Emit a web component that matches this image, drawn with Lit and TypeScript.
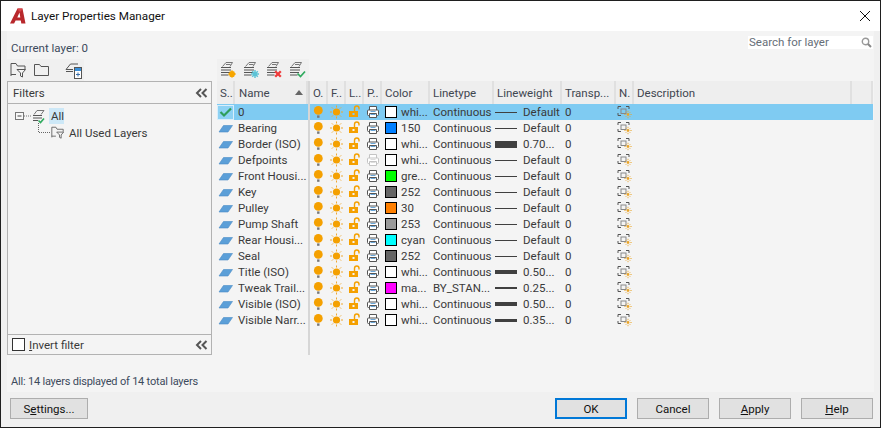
import { LitElement, html, css, svg } from "lit";
import { customElement } from "lit/decorators.js";

const G = "#555";
const ORANGE = "#f4a000";

const bulb = () => html`<svg class="ic" width="18" height="16" viewBox="0 0 18 16"><circle cx="8.3" cy="6.4" r="4.4" fill="${ORANGE}"/><rect x="7.1" y="11.4" width="2.4" height="2.4" fill="#777"/></svg>`;
const sun = () => html`<svg class="ic" width="18" height="16" viewBox="0 0 18 16"><circle cx="8.5" cy="8" r="3.6" fill="${ORANGE}"/><g stroke="#f0a830" stroke-width="1" fill="none"><path d="M8.5 1.5v2M8.5 12.5v2M2 8h2M13 8h2M3.9 3.4l1.2 1.2M11.9 11.4l1.2 1.2M13.1 3.4l-1.2 1.2M5.1 11.4l-1.2 1.2"/></g></svg>`;
const lock = () => html`<svg class="ic" width="18" height="16" viewBox="0 0 18 16"><path d="M3 7h9v6H3zM6.5 9v2h2V9z" fill="${ORANGE}" fill-rule="evenodd"/><path d="M8.5 7V4.2C8.5 2.8 9.5 2 10.8 2s2.2.8 2.2 2.2V5.5" fill="none" stroke="${ORANGE}" stroke-width="1.4"/></svg>`;
const printer = (dim: boolean) => {
  const c = dim ? "#c4c4c4" : G;
  return html`<svg class="ic" width="18" height="16" viewBox="0 0 18 16"><path d="M5.5 6V2.5h7V6" fill="#fff" stroke="${c}"/><rect x="3.5" y="6" width="11" height="5.5" rx="1" fill="#fff" stroke="${c}"/><path d="M5.5 9.5v4h7v-4z" fill="#fff" stroke="${c}"/><path d="M6.5 10.5h5" stroke="${dim ? "#ddd" : "#6aa6d8"}"/><path d="M6.5 7.5h5" stroke="${dim ? "#ddd" : "#6aa6d8"}"/></svg>`;
};
const vpIcon = () => html`<svg class="ic" width="18" height="16" viewBox="0 0 18 16"><path d="M2 5V2.5h3M10 2.5h3V5M2 9v2.5h3" fill="none" stroke="${G}"/><rect x="5" y="5" width="5" height="4.5" fill="none" stroke="#888"/><circle cx="12" cy="10.5" r="1.4" fill="#eaa52a"/><path d="M12 6.8v1.4M12 12.8v1.4M8.3 10.5h1.4M14.3 10.5h1.4M9.6 8.1l.8.8M13.6 12.1l.8.8M14.4 8.1l-.8.8M10.4 12.1l-.8.8" stroke="#eaa52a" stroke-width=".8"/></svg>`;
const parallelogram = () => html`<svg class="ic" width="18" height="16" viewBox="0 0 18 16"><path d="M2 12 6.5 5.5H15.5L11 12Z" fill="#5b9fd8" stroke="#4a8cc6" stroke-width=".6"/></svg>`;
const check = () => html`<span class="cur"><svg width="14" height="12" viewBox="0 0 14 12"><path d="M1.5 6 5 9.5 12 2.5" fill="none" stroke="#2f9e5b" stroke-width="2.2"/></svg></span>`;
const chevrons = () => html`<svg class="chev" width="13" height="10" viewBox="0 0 13 10"><path d="M6 1 2 5l4 4M11.5 1l-4 4 4 4" fill="none" stroke="#555" stroke-width="2"/></svg>`;

const stack = svg`<g fill="none" stroke="${G}" stroke-width="1"><path d="M2 7.5h10M2 10h10M2 12.5h9M2 15h7.5"/><path d="M3.5 6.5 7 2.5h6.5L11 6.5M7 4.5h4.5" stroke="#777"/></g>`;
const layerIcon = (mark: unknown) => html`<svg class="tool" width="20" height="20" viewBox="0 0 20 20">${stack}${mark}</svg>`;
const markStar = svg`<path d="M13 10.5v7M9.5 14h7M10.7 11.7l4.6 4.6M15.3 11.7l-4.6 4.6" stroke="#f7a600" stroke-width="1.8"/>`;
const markSnow = svg`<path d="M13 10v8M9 14h8M10.2 11.2l5.6 5.6M15.8 11.2l-5.6 5.6" stroke="#5cc3d6" stroke-width="1.5"/>`;
const markX = svg`<path d="M10.2 11.2l5.6 5.6M15.8 11.2l-5.6 5.6" stroke="#ef3b3b" stroke-width="2.3"/>`;
const markCheck = svg`<path d="M9.5 13.5l3 3 4.5-5" fill="none" stroke="#2faa5e" stroke-width="1.7"/>`;

const folderFilter = (s = 16) => html`<svg width="${s}" height="${s}" viewBox="0 0 16 16"><path d="M1 14V1.5h5L7.5 4H15v3M1 12.5h5" fill="none" stroke="${G}"/><path d="M7 7.5h8.5L12.5 11v4l-2-1v-3z" fill="#f4f4f4" stroke="${G}"/></svg>`;
const folder = () => html`<svg width="15" height="14" viewBox="0 0 15 14"><path d="M.5 12.5V1.5h5L7 3.5h7.5v9z" fill="none" stroke="${G}"/></svg>`;
const docIcon = () => html`<svg width="17" height="17" viewBox="0 0 17 17"><path d="M1 7.5 5.5 2H13M1 9.5h7M1 7.5h7" fill="none" stroke="${G}"/><rect x="9.5" y="5.5" width="7" height="11" fill="#fff" stroke="${G}"/><rect x="10" y="6" width="6" height="3" fill="#3a8fd8"/><path d="M13 10.5v4M11 12.5h4" stroke="#3a6ea8"/></svg>`;
const logo = () => html`<svg width="16" height="16" viewBox="0 0 16 16"><path d="M0 15.5 7.5 .5h5l3 15h-4.2l-.5-3H5.6l-1.5 3zM7.3 9.5h3L9.5 4.5z" fill="#b8282c" fill-rule="evenodd"/><path d="M7.5 .5h5l-1.6 3H8.8z" fill="#d9464a"/></svg>`;

interface Layer { name: string; color: string; sw: string; type?: string; lw: number; weight?: string; dim?: boolean; cur?: boolean }
const layers: Layer[] = [
  { name: "0", color: "whi...", sw: "#fff", lw: 1, cur: true },
  { name: "Bearing", color: "150", sw: "#007fff", lw: 1 },
  { name: "Border (ISO)", color: "whi...", sw: "#fff", lw: 7, weight: "0.70..." },
  { name: "Defpoints", color: "whi...", sw: "#fff", lw: 1, dim: true },
  { name: "Front Housi...", color: "gre...", sw: "#00ff00", lw: 1 },
  { name: "Key", color: "252", sw: "#656565", lw: 1 },
  { name: "Pulley", color: "30", sw: "#ff7f00", lw: 1 },
  { name: "Pump Shaft", color: "253", sw: "#9a9a9a", lw: 1 },
  { name: "Rear Housi...", color: "cyan", sw: "#00ffff", lw: 1 },
  { name: "Seal", color: "252", sw: "#656565", lw: 1 },
  { name: "Title (ISO)", color: "whi...", sw: "#fff", lw: 4, weight: "0.50..." },
  { name: "Tweak Trail...", color: "ma...", sw: "#ff00ff", type: "BY_STAN...", lw: 2, weight: "0.25..." },
  { name: "Visible (ISO)", color: "whi...", sw: "#fff", lw: 4, weight: "0.50..." },
  { name: "Visible Narr...", color: "whi...", sw: "#fff", lw: 3, weight: "0.35..." },
];

@customElement("app-root")
export class AppRoot extends LitElement {
  static styles = css`
    :host { display: block; width: 881px; height: 428px; font-family: Roboto, "Open Sans", sans-serif; font-size: 11.5px; color: #3a3a3a; }
    * { box-sizing: border-box; }
    svg { display: block; flex: none; }
    .win { height: 428px; border: 1px solid #1f1f1f; background: #f0f0f0; display: flex; flex-direction: column; }
    .title { height: 30px; background: #fff; display: flex; align-items: center; padding: 0 10px 0 9px; gap: 5px; color: #111; font-size: 11.7px; flex: none; }
    .title .name { flex: 1; }
    .main { flex: 1; margin: 0 6px 0 6px; background: #f4f4f4; display: flex; flex-direction: column; min-height: 0; }
    .top { display: flex; justify-content: space-between; align-items: flex-start; height: 24px; padding-top: 5px; flex: none; }
    .cl { padding: 5px 0 0 4px; color: #3c4a5c; line-height: 14px; }
    .search { width: 125px; height: 13px; background: #fff; display: flex; align-items: center; justify-content: space-between; color: #666e78; padding: 0 1px 0 1px; margin-right: 1px; line-height: 13px; }
    .bars { display: flex; height: 22px; margin-top: 4px; flex: none; gap: 5px; }
    .bar { display: flex; align-items: center; background: #f0f0f0; }
    .bar.l { width: 77px; margin-right: 128px; padding-left: 3px; }
    .bar.l svg:nth-child(2) { margin: 0 0 0 8px; }
    .bar.l svg:nth-child(3) { margin-left: 16px; }
    .bar.r { width: 92px; padding-left: 2px; gap: 3px; }
    .tool { width: 20px; height: 20px; }
    .content { display: flex; gap: 5px; height: 274px; flex: none; }
    .filters { width: 205px; border: 1px solid #b2b2b2; display: flex; flex-direction: column; flex: none; }
    .fhead { height: 22px; border-bottom: 1px solid #b2b2b2; display: flex; align-items: center; justify-content: space-between; padding: 0 3px 0 5px; flex: none; }
    .chev { margin-top: 1px; }
    .tree { flex: 1; padding: 4px 0 0 7px; }
    .node { display: flex; align-items: center; height: 16px; }
    .sel { background: #cde8f7; padding: 0 2px; margin-left: 4px; line-height: 16px; width: 15px; }
    .child { display: flex; align-items: flex-start; height: 18px; padding-left: 23px; margin-top: -1px; }
    .child svg:nth-child(2) { margin-top: 3px; }
    .child span { margin: 3px 0 0 5px; line-height: 14px; }
    .ffoot { height: 20px; border-top: 1px solid #b2b2b2; display: flex; align-items: center; padding: 0 3px 0 4px; flex: none; }
    .box { width: 13px; height: 13px; border: 1px solid #333; background: #fff; margin-right: 4px; flex: none; }
    .ffoot .t { flex: 1; }
    u { text-underline-offset: 1px; }
    .table { width: 656px; display: flex; flex-direction: column; flex: none; }
    .grid { display: grid; grid-template-columns: 18px 73px 2px 18px 18px 18px 18px 48px 64px 68px 54px 18px 218px 21px; }
    .hdr { height: 23px; background: #eeeeee; }
    .hdr > div { border-right: 2px solid #e0e0e0; display: flex; align-items: center; padding-left: 3px; white-space: nowrap; overflow: hidden; justify-content: space-between; padding-right: 3px; color: #3f4650; }
    .hdr > .split, .fill > .split, .row > .split { background: #d6d6d6; border: none; padding: 0; }
    .hdr > .sn { padding-left: 4px; }
    .row { height: 16px; line-height: 16px; white-space: nowrap; }
    .row.on { background: #7fcbf2; }
    .row > div { display: flex; align-items: center; overflow: hidden; }
    .cname { padding-left: 3px; }
    .ccolor { padding-left: 3px; gap: 4px; }
    .sw { width: 12px; height: 12px; border: 1px solid #000; flex: none; }
    .ctype { padding-left: 3px; }
    .cw { padding-left: 1px; }
    .ln { width: 22px; background: #404040; flex: none; }
    .cw span { margin-left: 6px; }
    .ctr { padding-left: 3px; }
    .cur { width: 17px; height: 15px; border: 1px solid #d8eefb; display: flex; align-items: center; justify-content: center; background: #8ed2f4; }
    .fill { flex: 1; }
    .status { height: 17px; margin-top: 18px; padding-left: 4px; line-height: 17px; color: #3c4a5c; flex: none; font-size: 11px; letter-spacing: -0.2px; }
    .foot { height: 35px; flex: none; display: flex; align-items: flex-start; padding: 6px 7px 0 9px; gap: 10px; }
    .btn { width: 72px; height: 21px; background: #e1e1e1; border: 1px solid #adadad; display: flex; align-items: center; justify-content: center; color: #111; font-size: 11.5px; }
    .btn.s { width: 78px; margin-right: auto; }
    .btn.d { border: 2px solid #0078d7; }
  `;

  private row(l: Layer) {
    return html`<div class="grid row ${l.cur ? "on" : ""}">
      <div>${l.cur ? check() : parallelogram()}</div>
      <div class="cname">${l.name}</div>
      <div class="split"></div>
      <div>${bulb()}</div><div>${sun()}</div><div>${lock()}</div><div>${printer(!!l.dim)}</div>
      <div class="ccolor"><i class="sw" style="background:${l.sw}"></i>${l.color}</div>
      <div class="ctype">${l.type ?? "Continuous"}</div>
      <div class="cw"><i class="ln" style="height:${l.lw}px"></i><span>${l.weight ?? "Default"}</span></div>
      <div class="ctr">0</div>
      <div>${vpIcon()}</div><div></div><div></div>
    </div>`;
  }

  render() {
    return html`<div class="win">
      <div class="title">${logo()}<span class="name">Layer Properties Manager</span>
        <svg width="10" height="10" viewBox="0 0 10 10"><path d="M0 0l10 10M10 0 0 10" stroke="#111" stroke-width="1"/></svg></div>
      <div class="main">
        <div class="top"><div class="cl">Current layer: 0</div>
          <div class="search">Search for layer<svg width="11" height="11" viewBox="0 0 11 11"><circle cx="4.5" cy="4.5" r="3.2" fill="none" stroke="#999" stroke-width="1.4"/><path d="M7 7l3 3" stroke="#888" stroke-width="2"/></svg></div></div>
        <div class="bars">
          <div class="bar l">${folderFilter()}${folder()}${docIcon()}</div>
          <div class="bar r">${layerIcon(markStar)}${layerIcon(markSnow)}${layerIcon(markX)}${layerIcon(markCheck)}</div>
        </div>
        <div class="content">
          <div class="filters">
            <div class="fhead"><span>Filters</span>${chevrons()}</div>
            <div class="tree">
              <div class="node">
                <svg width="30" height="16" viewBox="0 0 30 16"><rect x=".5" y="4.5" width="8" height="7" fill="#f8f8f8" stroke="#777"/><path d="M2.5 8h4" stroke="#444"/><path d="M9 8h8" stroke="#777" stroke-dasharray="1 1"/><g fill="none" stroke="${G}"><path d="M18 7.5h9M18 10h9M18 12.5h5"/><path d="M19 6.5 22 2.5H29L26 6.5" stroke="#777"/></g><path d="M23.5 12.5l2 2 3.5-4" fill="none" stroke="#2faa5e" stroke-width="1.6"/></svg>
                <span class="sel">All</span>
              </div>
              <div class="child">
                <svg width="13" height="18" viewBox="0 0 13 18"><path d="M.5 0v9.5H13" fill="none" stroke="#666" stroke-dasharray="1 1"/></svg>
                ${folderFilter(13)}<span>All Used Layers</span>
              </div>
            </div>
            <div class="ffoot"><i class="box"></i><div class="t"><u>I</u>nvert filter</div>${chevrons()}</div>
          </div>
          <div class="table">
            <div class="grid hdr">
              <div>S..</div>
              <div class="sn">Name<svg width="8" height="5" viewBox="0 0 8 5"><path d="M0 5 4 0l4 5z" fill="#666"/></svg></div>
              <div class="split"></div>
              <div>O.</div><div>F..</div><div>L..</div><div>P..</div>
              <div>Color</div><div>Linetype</div><div>Lineweight</div><div>Transp...</div><div>N.</div><div>Description</div><div></div>
            </div>
            ${layers.map((l) => this.row(l))}
            <div class="grid fill"><div></div><div></div><div class="split"></div></div>
          </div>
        </div>
        <div class="status">All: 14 layers displayed of 14 total layers</div>
      </div>
      <div class="foot">
        <div class="btn s">S<u>e</u>ttings...</div>
        <div class="btn d">OK</div>
        <div class="btn">Cancel</div>
        <div class="btn"><u>A</u>pply</div>
        <div class="btn"><u>H</u>elp</div>
      </div>
    </div>`;
  }
}
